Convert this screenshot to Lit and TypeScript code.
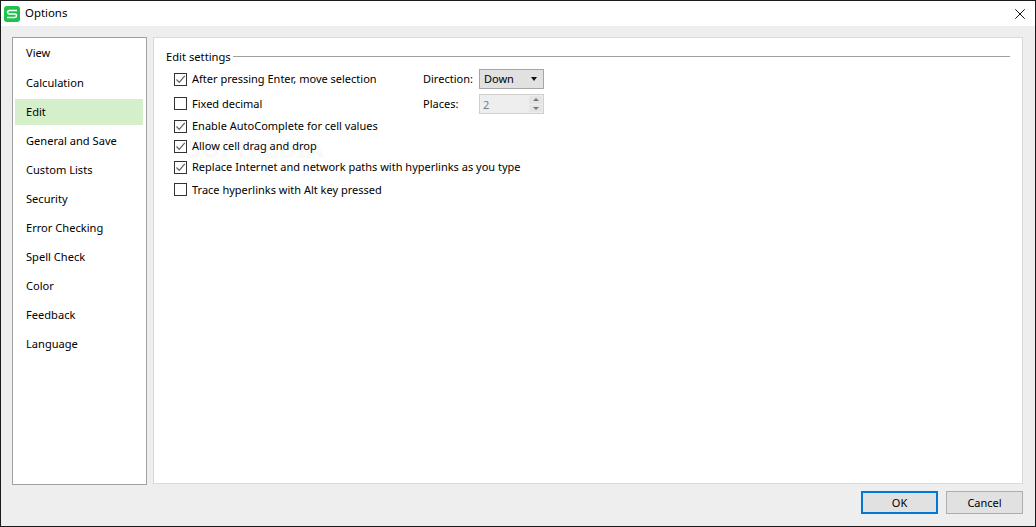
import { LitElement, html, css } from "lit";
import { customElement } from "lit/decorators.js";

const NAV = ["View","Calculation","Edit","General and Save","Custom Lists","Security","Error Checking","Spell Check","Color","Feedback","Language"];

const check = html`<svg viewBox="0 0 13 13" width="13" height="13"><path d="M2.5 6.5 L5.2 9.3 L10.8 2.8" fill="none" stroke="#5f5f5f" stroke-width="1.2"/></svg>`;

@customElement("app-root")
export class AppRoot extends LitElement {
  static styles = css`
    :host { display: block; width: 1036px; height: 527px; font-family: "Noto Sans", "Open Sans", sans-serif; font-size: 11px; color: #000; }
    .win { box-sizing: border-box; width: 1036px; height: 527px; display: flex; flex-direction: column; background: #eeeeee; border: 1px solid #1a1a1a; }
    .title { height: 25px; flex: none; background: #fff; display: flex; align-items: center; padding: 0 10px 0 3px; gap: 5px; font-size: 11.4px; }
    .title .name { flex: 1; padding-bottom: 2px; }
    .body { flex: none; display: flex; gap: 6px; padding: 11px 12px 0 11px; }
    .nav { box-sizing: border-box; width: 135px; height: 448px; flex: none; background: #fff; border: 1px solid #a0a0a0; padding: 1px 2px; display: flex; flex-direction: column; font-size: 11.1px; }
    .nav div { box-sizing: border-box; height: 29px; flex: none; display: flex; align-items: center; padding: 0 0 0 11px; }
    .nav div:first-child { padding-bottom: 2px; }
    .nav .on { background: #d6efcb; height: 26px; margin-top: 2px; margin-bottom: 1px; margin-right: 1px; padding-bottom: 2px; }
    .panel { box-sizing: border-box; flex: 1; height: 447px; background: #fff; border: 1px solid #d9d9d9; padding: 11px 12px 0 12px; position: relative; }
    .legend { display: flex; align-items: center; gap: 2px; height: 14px; font-size: 11.2px; }
    .legend i { flex: 1; height: 1px; background: #a0a0a0; }
    .row { display: flex; align-items: center; margin-left: 8px; position: relative; }
    .cb { box-sizing: border-box; width: 13px; height: 13px; border: 1px solid #333; background: #fff; margin-right: 5px; flex: none; display: flex; }
    .cb svg { margin: -1px; flex: none; }
    .label { white-space: nowrap; position: relative; top: -1px; }
    .r1 { height: 22px; margin-top: 5px; }
    .r2 { height: 22px; margin-top: 2px; }
    .r2 .label, .r6 .label { top: 0; }
    .r3 { height: 20px; margin-top: 2px; }
    .r4 { height: 20px; margin-top: 0; }
    .r5 { height: 20px; margin-top: 1px; }
    .r6 { height: 20px; margin-top: 2px; }
    .side { position: absolute; left: 249px; top: 1px; display: flex; align-items: center; gap: 6px; white-space: nowrap; }
    .r2 .side { top: 2px; }
    .lab { width: 50px; padding-bottom: 2px; }
    .combo { box-sizing: border-box; width: 65px; height: 20px; background: #e1e1e1; border: 1px solid #a6a6a6; display: flex; align-items: center; justify-content: space-between; padding: 0 6px 0 4px; }
    .combo > span:first-child { padding-bottom: 2px; }
    .arrow { width: 0; height: 0; border-left: 3.5px solid transparent; border-right: 3.5px solid transparent; border-top: 4px solid #111; }
    .spin { box-sizing: border-box; width: 65px; height: 20px; background: #eeeeee; border: 1px solid #cfcfcf; display: flex; align-items: center; justify-content: space-between; padding: 0 1px 0 3px; color: #7a7a7a; }
    .btns { width: 13px; height: 16px; display: flex; flex-direction: column; gap: 1px; }
    .btns span { flex: 1; background: #e4e4e4; display: flex; align-items: center; justify-content: center; }
    .up { width: 0; height: 0; border-left: 3px solid transparent; border-right: 3px solid transparent; border-bottom: 3px solid #777; }
    .dn { width: 0; height: 0; border-left: 3px solid transparent; border-right: 3px solid transparent; border-top: 3px solid #777; }
    .wm { position: absolute; left: 33px; top: 93px; font-size: 25px; font-weight: 700; color: #000; opacity: .02; pointer-events: none; }
    .foot { flex: 1; display: flex; justify-content: flex-end; align-items: flex-start; gap: 8px; padding: 6px 12px 0 0; }
    button { box-sizing: border-box; width: 77px; height: 23px; font: inherit; color: #000; background: #e1e1e1; border: 1px solid #adadad; padding: 0; }
    button.def { border: 2px solid #0078d7; }
    .x { display: block; }
  `;
  private cb(on: boolean) { return html`<span class="cb">${on ? check : ""}</span>`; }
  render() {
    return html`<div class="win">
      <div class="title">
        <svg width="16" height="16" viewBox="0 0 16 16"><rect width="16" height="16" rx="3" fill="#1fc24c"/><path d="M13 4.6H5.2a1.7 1.7 0 0 0 0 3.4h5.6a1.7 1.7 0 0 1 0 3.4H3" fill="none" stroke="#fff" stroke-width="1.5"/></svg>
        <span class="name">Options</span>
        <svg class="x" width="10" height="10" viewBox="0 0 10 10"><path d="M.3.3 9.7 9.7M9.7.3.3 9.7" stroke="#111" stroke-width="1"/></svg>
      </div>
      <div class="body">
        <div class="nav">${NAV.map(n => html`<div class=${n === "Edit" ? "on" : ""}>${n}</div>`)}</div>
        <div class="panel">
          <div class="legend"><span>Edit settings</span><i></i></div>
          <div class="row r1">${this.cb(true)}<span class="label">After pressing Enter, move selection</span>
            <div class="side"><span class="lab">Direction:</span><div class="combo"><span>Down</span><span class="arrow"></span></div></div></div>
          <div class="row r2">${this.cb(false)}<span class="label">Fixed decimal</span>
            <div class="side"><span class="lab">Places:</span><div class="spin"><span>2</span><span class="btns"><span><i class="up"></i></span><span><i class="dn"></i></span></span></div></div></div>
          <div class="row r3">${this.cb(true)}<span class="label">Enable AutoComplete for cell values</span></div>
          <div class="row r4">${this.cb(true)}<span class="label">Allow cell drag and drop</span></div>
          <div class="row r5">${this.cb(true)}<span class="label">Replace Internet and network paths with hyperlinks as you type</span></div>
          <div class="row r6">${this.cb(false)}<span class="label">Trace hyperlinks with Alt key pressed</span></div>
          <div class="wm">SOFTPEDIA</div>
        </div>
      </div>
      <div class="foot"><button class="def">OK</button><button>Cancel</button></div>
    </div>`;
  }
}
